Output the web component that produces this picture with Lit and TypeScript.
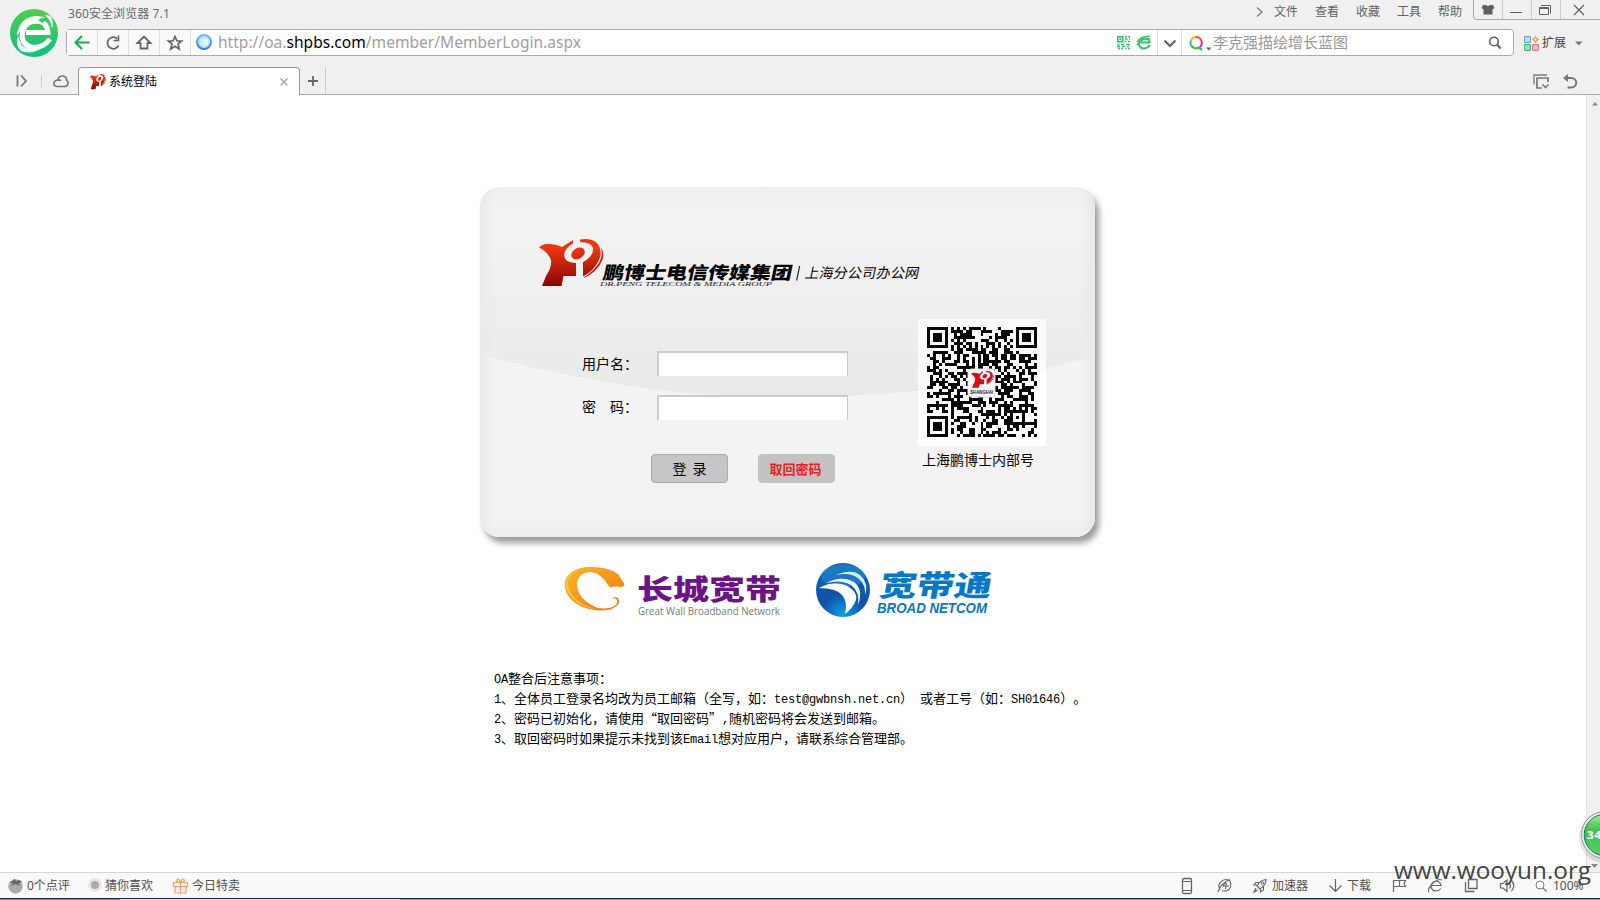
import { LitElement, html, css, svg } from "lit";
import { customElement } from "lit/decorators.js";

const QR_SIZE = 37;

function qrPath(): string {
  let seed = 20147;
  const rnd = () => {
    seed = (seed * 1103515245 + 12345) & 0x7fffffff;
    return (seed >> 12) / (0x7fffffff >> 12);
  };
  const inFinder = (x: number, y: number) =>
    (x < 8 && y < 8) || (x > 28 && y < 8) || (x < 8 && y > 28);
  const finder = (x: number, y: number) => {
    const fx = x > 28 ? x - 30 : x;
    const fy = y > 28 ? y - 30 : y;
    if (fx < 0 || fy < 0 || fx > 6 || fy > 6) return false;
    const d = Math.max(Math.abs(fx - 3), Math.abs(fy - 3));
    return d !== 2;
  };
  let d = "";
  for (let y = 0; y < QR_SIZE; y++) {
    for (let x = 0; x < QR_SIZE; x++) {
      const r = rnd();
      let on = r < 0.51;
      if (inFinder(x, y)) on = finder(x, y);
      else if (x >= 28 && x <= 32 && y >= 28 && y <= 32) {
        on = Math.max(Math.abs(x - 30), Math.abs(y - 30)) !== 1;
      } else if (y === 6) on = x % 2 === 0;
      else if (x === 6) on = y % 2 === 0;
      if (on) d += `M${x} ${y}h1v1h-1z`;
    }
  }
  return d;
}

const mark = (fill: string) => svg`
  <g fill=${fill}>
    <path d="M0 8.500Q3 5 8 5Q17 5 23 8L34 1V4.500Q26 9 25 16Q26 24 37 24V37H24.500L22.500 47H3L7 37Q13 28 12 21Q9 13 0 8.500Z"/>
    <ellipse cx="39" cy="14.500" rx="7.200" ry="5.300" transform="rotate(-32 39 14.500)"/>
    <path d="M41 0.500Q52-1.500 58 4Q64 11 60 21Q55 32 44 37.500V23Q55 17 54 9Q52 3 41 3Z"/>
    <path d="M61.500 8Q66.500 14 63 22Q58 33 45 39V38.200Q56 31.500 61 22Q64 14 61.500 8Z"/>
  </g>`;

@customElement("app-root")
export class AppRoot extends LitElement {
  static styles = css`
    :host {
      display: flex;
      flex-direction: column;
      width: 1600px;
      height: 900px;
      overflow: hidden;
      position: relative;
      background: #fff;
      font: 12px/16px "Noto Sans", "Noto Sans CJK SC", sans-serif;
      color: #4d4f51;
      white-space: nowrap;
    }
    * { box-sizing: border-box; }
    svg { display: block; overflow: visible; fill: none; }
    .chrome {
      height: 95px;
      flex: none;
      background: #f0f0f0;
      display: grid;
      grid-template-columns: 66px 1fr;
      grid-template-rows: 28px 28px 39px;
    }
    .brand { grid-row: 1 / 3; padding: 8px 0 0 9px; }
    .top { display: flex; justify-content: space-between; }
    .title { padding: 6px 0 0 2px; color: #66696c; letter-spacing: 0.1px; }
    .menus { display: flex; color: #606264; }
    .menus span { width: 41px; padding-top: 4px; }
    .menus .more { width: 18px; padding-top: 7px; }
    .wins {
      display: grid;
      grid-template-columns: 28px 29px 29px 41px;
      height: 20px;
      width: 127px;
      border: solid #aaa;
      border-width: 0 0 1px 1px;
      border-radius: 0 0 0 4px;
      margin-left: -6px;
    }
    .wins svg { border-left: 1px solid #ccc; width: 100%; height: 19px; }
    .wins svg:first-child { border: 0; }
    .bar-row { display: flex; padding-top: 1px; }
    .bar {
      display: grid;
      grid-template-columns: 31px 31px 31px 31px 27px 899px 20px 20px 25px 32px 275px 24px;
      width: 1448px;
      height: 27px;
      background: #fff;
      border: 1px solid #aaa;
      border-radius: 4px;
      align-items: center;
      flex: none;
    }
    .btn {
      height: 25px;
      background: #f9f9f9;
      border-right: 1px solid #ddd;
    }
    .drop { height: 25px; border: solid #ddd; border-width: 0 1px; }
    .query { color: #999; font-size: 15px; line-height: 20px; padding-bottom: 2px; margin-left: -1px; }
    .ext { display: flex; padding: 5px 0 0 10px; gap: 2px; color: #444; }
    .ext span { padding-top: 1px; }
    .tabs {
      grid-column: 1 / 3;
      display: flex;
      align-items: flex-end;
      border-bottom: 1px solid #aaa;
    }
    .tools { width: 78px; height: 28px; }
    .tab {
      display: flex;
      width: 222px;
      height: 28px;
      margin-bottom: -1px;
      border: 1px solid #999;
      border-bottom: 0;
      border-radius: 4px 4px 0 0;
      background: #fff;
      color: #000;
      padding: 5px 0 0 11px;
    }
    .tab span { padding: 1px 0 0 3px; width: 173px; }
    .plus { width: 26px; height: 27px; border-right: 1px solid #ccc; }
    .tabend { margin-left: auto; width: 70px; height: 27px; }
    .body { display: flex; height: 777px; flex: none; }
    .page { width: 1586px; padding: 92px 0 0 480px; }
    .scroll { width: 14px; background: #f0f0f0; border-left: 1px solid #e2e2e2; }
    .shadow {
      width: 615px;
      height: 350px;
      border-radius: 20px;
      box-shadow: 4px 6px 6px rgba(0, 0, 0, .4);
    }
    .card {
      width: 615px;
      height: 350px;
      border-radius: 20px;
      overflow: hidden;
      display: grid;
      grid-template-columns: 438px 1fr;
      grid-template-rows: 132px 1fr;
      background: #f3f3f3;
    }
    .wave { grid-area: 1 / 1 / 3 / 3; }
    .logo { grid-area: 1 / 1 / 2 / 3; padding: 52px 0 0 59px; z-index: 1; }
    .form { grid-area: 2 / 1; padding: 32px 0 0 102px; z-index: 1; color: #000; font-size: 14px; }
    .row { display: flex; height: 25px; margin-bottom: 19px; }
    .row label { width: 75px; line-height: 26px; text-spacing-trim: space-all; }
    .row + .row label { line-height: 24px; }
    .row input {
      width: 191px;
      height: 25px;
      border: solid #ccc;
      border-width: 2px 1px 0 2px;
      background: #fff;
      outline: 0;
      padding: 0;
      border-radius: 0;
    }
    .acts { display: flex; gap: 30px; padding: 15px 0 0 69px; }
    .acts button {
      width: 77px;
      height: 29px;
      border: 1px solid #aaa;
      border-radius: 4px;
      background: #c7c5c6;
      font: 14px/16px "Noto Sans CJK SC", sans-serif;
      padding: 0 0 1px;
      color: #000;
      word-spacing: 3px;
    }
    .acts .get {
      border-color: #c3c1c2;
      background: #c3c1c2;
      color: #ed1c24;
      font-weight: 700;
      font-size: 13px;
      padding: 1px 2px 0 0;
    }
    .code { grid-area: 2 / 2; z-index: 1; color: #000; font-size: 14px; }
    .code p { margin: 5px 0 0 4px; line-height: 18px; }
    .partners { padding: 26px 0 0 84px; height: 107px; }
    .notes {
      padding: 24px 0 0 14px;
      height: 110px;
      font: 13px/20px "Noto Sans CJK SC", sans-serif;
      text-spacing-trim: space-all;
      color: #000;
    }
    .notes div { height: 20px; }
    .notes i { font: 12px/16px "Liberation Mono", monospace; letter-spacing: -0.2px; }
    .status {
      height: 26px;
      flex: none;
      background: #f9f9f9;
      border-top: 1px solid #d5d5d5;
      display: grid;
      grid-template-columns: 27px 60px 18px 67px 20px 988px 37px 36px 19px 56px 19px 45px 36px 36px 35px 36px 18px 1fr;
      align-items: center;
    }
    .task {
      height: 2px;
      border-top: 1px solid #14233f;
      background: linear-gradient(90deg, #7195c8 120px, #dfe8f4 120px, #dfe8f4 400px, #7f9dc8 400px);
    }
    .wm { position: absolute; left: 1394px; top: 846px; }
    .ball { position: absolute; left: 1578px; top: 808px; }
  `;

  render() {
    return html`
      <header class="chrome">
        <div class="brand">
          <svg width="50" height="50">
            <defs><linearGradient id="g" x1="0" y1="0" x2="0" y2="1"><stop stop-color="#50ce4e"/><stop offset="1" stop-color="#10c080"/></linearGradient></defs>
            <circle cx="25" cy="25" r="24" fill="url(#g)"/>
            <path d="M17 24.500H39Q38 13 27 13Q14 14 13 28Q14 39 26 39.500Q35 39 41 31" stroke="#fff" stroke-width="5"/>
            <path d="M8 25Q12 9 27 8Q35 8 40 12Q35 10 28 13Q14 17 8 28Z" fill="#fff"/>
            <path d="M42.500 19Q42 12 36 7.500Q45 5.500 43.500 20ZM9 28Q6 38 12 43Q22 47 33 40Q20 44 12.500 37Z" fill="#fff"/>
            <path d="M29 12Q37 7 40 12Q36 12 33 15Z" fill="#38ca60"/>
          </svg>
        </div>
        <div class="top">
          <div class="title">360安全浏览器 7.1</div>
          <div class="menus">
            <span class="more"><svg width="8" height="10"><path d="M1 .5L6 5L1 9.500" stroke="#777" stroke-width="1.200"/></svg></span>
            <span>文件</span><span>查看</span><span>收藏</span><span>工具</span><span>帮助</span>
            <div class="wins">
              <svg><path d="M9 5h3q2 2 4 0h3l1.500 3l-2 1.500v5h-9v-5l-2-1.500z" fill="#606060"/></svg>
              <svg><path d="M7 12.500h12" stroke="#606060"/></svg>
              <svg><path d="M7.500 7.500h9v7h-9zM7 8.500h10M9 5.500h9.500v8" stroke="#606060"/></svg>
              <svg><path d="M13 5l10 10M23 5L13 15" stroke="#606060" stroke-width="1.200"/></svg>
            </div>
          </div>
        </div>
        <div class="bar-row">
          <div class="bar">
            <div class="btn"><svg width="30" height="25"><path d="M9 12.500H22.500M15 6L8.500 12.500L15 19" stroke="#12ae51" stroke-width="2"/></svg></div>
            <div class="btn"><svg width="30" height="25"><path d="M19.500 9A5.800 5.800 0 1 0 20.500 15.500" stroke="#666" stroke-width="1.800"/><path d="M20.500 5.500V10.500H15.500" stroke="#666" stroke-width="1.600"/></svg></div>
            <div class="btn"><svg width="30" height="25"><path d="M8.500 13L15 6.500L21.500 13H18.500V18.500H11.500V13Z" stroke="#666" stroke-width="1.800"/></svg></div>
            <div class="btn"><svg width="30" height="25"><path d="M15 6.500L17 11H21.500L18 14L19.300 19L15 16.200L10.700 19L12 14L8.500 11H13Z" stroke="#666" stroke-width="1.700"/></svg></div>
            <svg width="27" height="25">
              <defs><linearGradient id="gl" x1="0" y1="0" x2="0" y2="1"><stop stop-color="#72bdf2"/><stop offset="1" stop-color="#3b7bdc"/></linearGradient>
              <linearGradient id="gi"><stop stop-color="#bfe6ff"/><stop offset="1" stop-color="#fafdff"/></linearGradient></defs>
              <circle cx="13" cy="12" r="7" fill="url(#gi)" stroke="url(#gl)" stroke-width="2"/><circle cx="13" cy="12" r="5.200" stroke="#8cc9f4" stroke-width=".8"/>
            </svg>
            <svg width="400" height="25"><text x="0" y="18" font-size="16" fill="#a0a0a0" textLength="363" lengthAdjust="spacingAndGlyphs">http://oa.<tspan fill="#000">shpbs.com</tspan>/member/MemberLogin.aspx</text></svg>
            <svg width="14" height="25"><path d="M.8 6.800h5v5h-5zM8 6.800h2M11 6.800h2M8 9h2.500M12 9h1M7.500 11.500h2M11 11.500h2M.5 14.500h2M4 14.500h3M9 14.500h4M0 16.500h3M5 16.500h3M10 16.500h2M1 18.500h2M4 18.500h2M8 18.500h1.500M11 18.500h2" stroke="#3bbd6e" stroke-width="1.500"/><path d="M2.300 8.300h2v2h-2z" fill="#3bbd6e"/></svg>
            <svg width="14" height="25"><path d="M4 12.500H12.500Q12.500 8.500 8 8.500Q2 9.500 2 15Q3 18.500 7 18.500Q11 18 13 15" stroke="#31c366" stroke-width="2"/><path d="M0 12Q4 6 13 6M0 15Q6 7 13 9" stroke="#31c366" stroke-width="1.400"/></svg>
            <div class="drop"><svg width="24" height="25"><path d="M6.500 10.500L12 16L17.500 10.500" stroke="#606060" stroke-width="2"/></svg></div>
            <svg width="32" height="25"><path d="M9 15A5.700 5.700 0 0 1 9 10.500" stroke="#28b4ee" stroke-width="2"/><path d="M9 10.500A5.700 5.700 0 0 1 14 7" stroke="#ffb000" stroke-width="2"/><path d="M14 7A5.700 5.700 0 0 1 19.500 11" stroke="#ee4936" stroke-width="2"/><path d="M19.500 11A5.700 5.700 0 0 1 18 17" stroke="#d929cf" stroke-width="2"/><path d="M9 15A5.700 5.700 0 0 0 17 17.500L20 20" stroke="#35bf48" stroke-width="2.200"/><path d="M24 17.500h5.500l-2.700 3z" fill="#666"/></svg>
            <div class="query">李克强描绘增长蓝图</div>
            <svg width="14" height="25"><circle cx="5" cy="11.500" r="4.300" stroke="#606060" stroke-width="1.600"/><path d="M8 14.500L11.500 18.500" stroke="#606060" stroke-width="2"/></svg>
          </div>
          <div class="ext">
            <svg width="16" height="18"><path d="M.6 2.600h5.800v6H.6z" fill="#b9e2fb" stroke="#5a9fd0"/><path d="M.6 10.600h5.800v5.800H.6z" fill="#8fecb8" stroke="#3bac75"/><path d="M8.600 10.600h5.800v5.800H8.600z" fill="#ffb6b6" stroke="#dd7379"/><path d="M11.500 2.500l1 2l2.200 1l-2.200 1l-1 2l-1-2L8.300 5.500l2.200-1z" fill="#ffe36b" stroke="#d99136"/></svg>
            <span>扩展</span>
            <svg width="20" height="18"><path d="M7 7.500h7.500l-3.700 4z" fill="#777"/></svg>
          </div>
        </div>
        <div class="tabs">
          <svg class="tools"><path d="M17.500 9.500v11M21 9.500l5 5.500l-5 5.500" stroke="#777" stroke-width="1.800"/><path d="M41.500 9v12" stroke="#ccc"/><path d="M57 20.500Q53 20 54 16.500Q55 14 57.500 14Q59 9.500 63 10Q67 11 66.500 14Q69 16 67.500 19Q66.500 20.500 65 20.500ZM57 14.500Q59 13 61 15" stroke="#777" stroke-width="1.600"/></svg>
          <div class="tab">
            <svg width="16" height="17" viewBox="0 -3 65 52" preserveAspectRatio="none">
              <defs><linearGradient id="r" gradientUnits="userSpaceOnUse" x1="0" y1="0" x2="0" y2="47"><stop offset=".2" stop-color="#ee3712"/><stop offset="1" stop-color="#880404"/></linearGradient></defs>
              ${mark("url(#r)")}
            </svg>
            <span>系统登陆</span>
            <svg width="10" height="16"><path d="M1.500 5.500l7 7M8.500 5.500l-7 7" stroke="#999" stroke-width="1.100"/></svg>
          </div>
          <svg class="plus"><path d="M13 9v10M8 14h10" stroke="#666" stroke-width="1.800"/></svg>
          <svg class="tabend"><path d="M4 17.500V8H17" stroke="#999" stroke-width="1.800"/><path d="M12 21H7V11H18V15" stroke="#777" stroke-width="1.700"/><path d="M12.500 17.500l3 3l3-3" stroke="#777" stroke-width="1.600"/><path d="M35 11H41.500A4.700 4.700 0 0 1 41.500 20.500H37.500" stroke="#777" stroke-width="1.900"/><path d="M38 7v8l-5-4z" fill="#777"/></svg>
        </div>
      </header>

      <main class="body">
        <div class="page">
          <div class="shadow">
            <section class="card">
              <svg class="wave" width="615" height="350">
                <defs><linearGradient id="w" x1="0" y1="0" x2="0" y2="1"><stop stop-color="#efefef"/><stop offset=".14" stop-color="#f3f3f3"/><stop offset=".45" stop-color="#f0f0f0"/><stop offset="1" stop-color="#e9e9e9"/></linearGradient>
                <linearGradient id="bt" x1="0" y1="0" x2="0" y2="1"><stop stop-color="#ededed" stop-opacity="0"/><stop offset="1" stop-color="#ededed"/></linearGradient>
                <linearGradient id="sd"><stop stop-color="#eaeaea"/><stop offset=".025" stop-color="#eaeaea" stop-opacity="0"/><stop offset=".975" stop-color="#eaeaea" stop-opacity="0"/><stop offset="1" stop-color="#e7e7e7"/></linearGradient></defs>
                <path d="M0 0H615V169Q308 253 0 167Z" fill="url(#w)"/>
                <path d="M0 330H615V350H0Z" fill="url(#bt)"/>
                <path d="M0 0H615V350H0Z" fill="url(#sd)"/>
              </svg>
              <div class="logo">
                <svg width="400" height="50">
                  <defs><linearGradient id="r2" gradientUnits="userSpaceOnUse" x1="0" y1="0" x2="0" y2="47"><stop offset=".2" stop-color="#ee3712"/><stop offset="1" stop-color="#880404"/></linearGradient></defs>
                  ${mark("url(#r2)")}
                  <g transform="translate(63 39.500) skewX(-12)" fill="#000">
                    <text font-family="Noto Sans CJK SC" font-weight="900" font-size="17.500" textLength="189" lengthAdjust="spacingAndGlyphs">鹏博士电信传媒集团</text>
                    <path d="M195 2V-12.500" stroke="#222" stroke-width="1.200"/>
                    <text x="202" y="-1" font-family="Noto Sans CJK SC" font-size="14" textLength="114">上海分公司办公网</text>
                  </g>
                  <text x="61" y="47" font-family="Liberation Serif" font-style="italic" font-size="6.200" fill="#222" textLength="172" lengthAdjust="spacingAndGlyphs">DR.PENG TELECOM &amp; MEDIA GROUP</text>
                </svg>
              </div>
              <div class="form">
                <div class="row"><label>用户名：</label><input type="text" /></div>
                <div class="row"><label>密　码：</label><input type="password" /></div>
                <div class="acts"><button>登 录</button><button class="get">取回密码</button></div>
              </div>
              <div class="code">
                <svg width="128" height="127">
                  <rect width="128" height="127" fill="#fff" fill-opacity=".75"/>
                  <path d="M0 73Q64 67 128 52V127H0Z" fill="#fff" fill-opacity=".8"/>
                  <path transform="translate(9 8) scale(2.973)" d=${qrPath()} fill="#080808" shape-rendering="crispEdges"/>
                  <rect x="50" y="50" width="27" height="28" rx="3" fill="#fafafa" stroke="#ddd"/>
                  <g transform="translate(53 52) scale(.355)">${mark("#d80d1c")}</g>
                  <text x="52" y="75" font-family="Liberation Sans" font-style="italic" font-weight="700" font-size="4.500" fill="#222" textLength="23" lengthAdjust="spacingAndGlyphs">SHANGHAI</text>
                </svg>
                <p>上海鹏博士内部号</p>
              </div>
            </section>
          </div>

          <div class="partners">
            <svg width="440" height="56">
              <defs>
                <linearGradient id="o" x1="0" y1="0" x2="1" y2="1"><stop stop-color="#f9b82e"/><stop offset=".55" stop-color="#f49415"/><stop offset="1" stop-color="#ea730c"/></linearGradient>
                <radialGradient id="b" cx=".5" cy=".95" r=".9"><stop stop-color="#0aa0e0"/><stop offset=".45" stop-color="#1450a8"/><stop offset="1" stop-color="#0c63b4"/></radialGradient>
              </defs>
              <path d="M15 5.500Q24 3 39 5Q50 7 55 12Q57 17 60.500 21Q60 25 53 23.500Q49 23 46 24.500L44 22Q38 11 27 9Q15 9 13 20Q13 37 34 45Q50 47 53 40Q55 35 47 35Q56 32 55 40Q50 48 36 47.500Q12 46 3 31Q-5 13 15 5.500Z" fill="url(#o)"/>
              <path d="M24 5.500Q4 8 4 20Q5 38 32 46.500Q8 42 2 25Q-1 8 24 5.500Z" fill="#fbc347"/>
              <text x="73" y="36.500" font-family="Noto Sans CJK SC" font-weight="900" font-size="28" fill="#6c1487" textLength="144" lengthAdjust="spacingAndGlyphs">长城宽带</text>
              <text x="74" y="51.500" font-family="Open Sans" font-size="10.500" fill="#777" textLength="142" lengthAdjust="spacingAndGlyphs">Great Wall Broadband Network</text>
              <circle cx="279" cy="27" r="27" fill="url(#b)"/>
              <ellipse cx="279" cy="13" rx="22" ry="11.500" fill="#2f9fde" opacity=".4"/>
              <path d="M255 25Q268 18 281 22Q294 28 292 37Q289 45 281 51Q284 38 278 32Q272 25 255 25Z" fill="#fff"/>
              <path d="M262 20Q278 12 290 19Q300 27 294 42Q296 29 287 22Q277 16 262 20Z" fill="#f1f9ff"/>
              <path d="M272 12Q289 5 297 13Q305 21 301 32Q302 22 295 16Q287 9 272 12Z" fill="#d6edfa"/>
              <g transform="translate(314 33) skewX(-10)" fill="#0877c5">
                <text font-family="Noto Sans CJK SC" font-weight="900" font-size="29" textLength="112" lengthAdjust="spacingAndGlyphs">宽带通</text>
              </g>
              <text x="313" y="49.500" font-family="Liberation Sans" font-weight="700" font-style="italic" font-size="14" fill="#0877c5" textLength="110" lengthAdjust="spacingAndGlyphs">BROAD NETCOM</text>
            </svg>
          </div>

          <div class="notes">
            <div><i>OA</i>整合后注意事项：</div>
            <div><i>1</i>、全体员工登录名均改为员工邮箱（全写，如：<i>test@gwbnsh.net.cn</i>）<i> </i>或者工号（如：<i>SH01646</i>）。</div>
            <div><i>2</i>、密码已初始化，请使用“取回密码”<i>,</i>随机密码将会发送到邮箱。</div>
            <div><i>3</i>、取回密码时如果提示未找到该<i>Email</i>想对应用户，请联系综合管理部。</div>
          </div>
        </div>
        <div class="scroll"><svg width="13" height="777"><path d="M5 10.500h6l-3-3.500zM4 769h7l-3.500 4z" fill="#888"/></svg></div>
      </main>

      <footer class="status">
        <svg width="27" height="18"><circle cx="15.500" cy="9.500" r="7.200" fill="#aaa"/><path d="M9 5Q13 5 14.500 1.500L16 4.500Q20 2 22 5L18.500 6.500L20 9L15.500 7L11 9L13 6.500Z" fill="#666"/></svg>
        <span>0个点评</span>
        <svg width="16" height="16"><circle cx="8" cy="7" r="7" fill="#e6e6e6"/><circle cx="8" cy="7" r="4" fill="#aaa"/></svg>
        <span>猜你喜欢</span>
        <svg width="18" height="16"><path d="M1.500 4.500h14v4h-14zM3 8.500v6.500h11V8.500M8.500 4.500V15M8.500 4.500Q3 4 5 1.500Q7 0 8.500 4.500Q10 0 12 1.500Q14 4 8.500 4.500" stroke="#f2a077" fill="#fdf0ea" stroke-width="1.200"/></svg>
        <span>今日特卖</span>
        <svg width="16" height="18"><rect x="2.500" y="1.500" width="9" height="15" rx="1.500" stroke="#666" stroke-width="1.300"/><path d="M2 4.500h10M2 13.500h10" stroke="#666"/></svg>
        <svg width="16" height="16"><path d="M3 12Q0 6 5 3Q9 0 13 3Q15 8 12 11.500Q8 14 5 12.500M1 14Q4 5 13 1.500M9 4L6 8H12M9.500 5L8.500 11" stroke="#666" stroke-width="1.100"/></svg>
        <svg width="16" height="16"><path d="M4 8Q7 2 13 1.500Q13 7 7 11ZM4 7H1L3 4.500H6M7.500 11V14L10.500 12V9M3 10L1 14L5 12" stroke="#666" stroke-width="1.200"/><circle cx="9.500" cy="5" r="1.200" stroke="#666"/></svg>
        <span>加速器</span>
        <svg width="15" height="16"><path d="M7.500 1v12.500M1.500 7.500l6 6l6-6" stroke="#666" stroke-width="1.200"/></svg>
        <span>下载</span>
        <svg width="16" height="16"><path d="M1.500 14V2.500H7.500V8.500H1.500M7.500 2.500H13.500L12 5.500L13.500 8.500H7.500" stroke="#666" stroke-width="1.200"/></svg>
        <svg width="16" height="16"><path d="M3.500 7.500H13Q12 3 8 3Q3 4 3 9Q4 13 8 13Q11 13 13 10.500M1 14Q-1 12 4 6Q10 0 14 2" stroke="#666" stroke-width="1.200"/></svg>
        <svg width="16" height="16"><path d="M4.500 1.500h8.500v9H4.500zM1.500 4v9.500h9" stroke="#666" stroke-width="1.300"/></svg>
        <svg width="18" height="16"><path d="M1.500 5.500H4L8 2V13.500L4 10H1.500ZM10.500 5Q12.500 7.500 10.500 10.500M12.500 2.500Q17 7.500 12.500 13" stroke="#666" stroke-width="1.200"/></svg>
        <svg width="14" height="16"><circle cx="5" cy="7" r="4" stroke="#777"/><path d="M8 10l3.500 3.500" stroke="#777" stroke-width="1.200"/></svg>
        <span>100%</span>
      </footer>
      <div class="task"></div>

      <svg class="ball" width="22" height="56">
        <defs><linearGradient id="bl" x1="0" y1="0" x2="0" y2="1"><stop stop-color="#9ee89a"/><stop offset=".4" stop-color="#3fc050"/><stop offset="1" stop-color="#5ad06c"/></linearGradient></defs>
        <circle cx="27" cy="29" r="26" fill="#000" opacity=".1"/>
        <circle cx="27" cy="27" r="23.500" fill="#eee" stroke="#999"/>
        <circle cx="27" cy="27" r="20.800" fill="url(#bl)" stroke="#128147"/>
        <text x="8.500" y="30.500" font-family="DejaVu Sans" font-size="11" font-weight="700" fill="#fff">34</text>
      </svg>
      <svg class="wm" width="200" height="44"><text x="0" y="33" font-family="Open Sans" font-size="24.500" fill="#444" textLength="197" lengthAdjust="spacingAndGlyphs">www.wooyun.org</text></svg>
    `;
  }
}
